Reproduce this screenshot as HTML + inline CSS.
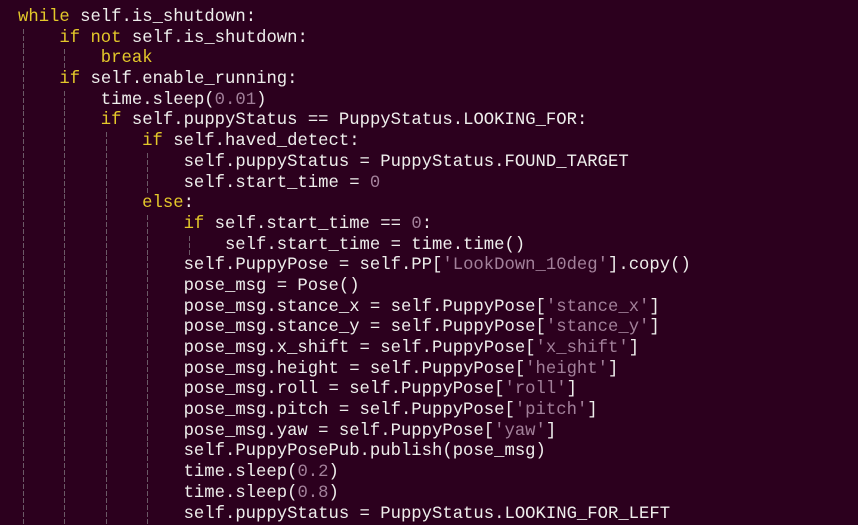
<!DOCTYPE html>
<html><head><meta charset="utf-8"><style>
html,body{margin:0;padding:0;background:#2c001e;width:858px;height:525px;overflow:hidden}
#c{position:absolute;left:18px;top:8px;font-family:"Liberation Mono",monospace;font-size:17.25px;line-height:20.7px;color:#eeeeec}
.l{height:20.7px;position:relative;white-space:pre}
.k{color:#e3c82a}
.s{color:#a2809a}
i{display:inline-block;width:41.4px;height:20.7px;vertical-align:top;background:repeating-linear-gradient(to bottom,#6b5966 0 5px,transparent 5px 7px) 5px 0/1px 100% no-repeat}
</style></head><body><div id="c"><div class="l"><span class="k">while</span> self.is_shutdown:</div><div class="l"><i></i><span class="k">if not</span> self.is_shutdown:</div><div class="l"><i></i><i></i><span class="k">break</span></div><div class="l"><i></i><span class="k">if</span> self.enable_running:</div><div class="l"><i></i><i></i>time.sleep(<span class="s">0.01</span>)</div><div class="l"><i></i><i></i><span class="k">if</span> self.puppyStatus == PuppyStatus.LOOKING_FOR:</div><div class="l"><i></i><i></i><i></i><span class="k">if</span> self.haved_detect:</div><div class="l"><i></i><i></i><i></i><i></i>self.puppyStatus = PuppyStatus.FOUND_TARGET</div><div class="l"><i></i><i></i><i></i><i></i>self.start_time = <span class="s">0</span></div><div class="l"><i></i><i></i><i></i><span class="k">else</span>:</div><div class="l"><i></i><i></i><i></i><i></i><span class="k">if</span> self.start_time == <span class="s">0</span>:</div><div class="l"><i></i><i></i><i></i><i></i><i></i>self.start_time = time.time()</div><div class="l"><i></i><i></i><i></i><i></i>self.PuppyPose = self.PP[<span class="s">'LookDown_10deg'</span>].copy()</div><div class="l"><i></i><i></i><i></i><i></i>pose_msg = Pose()</div><div class="l"><i></i><i></i><i></i><i></i>pose_msg.stance_x = self.PuppyPose[<span class="s">'stance_x'</span>]</div><div class="l"><i></i><i></i><i></i><i></i>pose_msg.stance_y = self.PuppyPose[<span class="s">'stance_y'</span>]</div><div class="l"><i></i><i></i><i></i><i></i>pose_msg.x_shift = self.PuppyPose[<span class="s">'x_shift'</span>]</div><div class="l"><i></i><i></i><i></i><i></i>pose_msg.height = self.PuppyPose[<span class="s">'height'</span>]</div><div class="l"><i></i><i></i><i></i><i></i>pose_msg.roll = self.PuppyPose[<span class="s">'roll'</span>]</div><div class="l"><i></i><i></i><i></i><i></i>pose_msg.pitch = self.PuppyPose[<span class="s">'pitch'</span>]</div><div class="l"><i></i><i></i><i></i><i></i>pose_msg.yaw = self.PuppyPose[<span class="s">'yaw'</span>]</div><div class="l"><i></i><i></i><i></i><i></i>self.PuppyPosePub.publish(pose_msg)</div><div class="l"><i></i><i></i><i></i><i></i>time.sleep(<span class="s">0.2</span>)</div><div class="l"><i></i><i></i><i></i><i></i>time.sleep(<span class="s">0.8</span>)</div><div class="l"><i></i><i></i><i></i><i></i>self.puppyStatus = PuppyStatus.LOOKING_FOR_LEFT</div></div></body></html>
